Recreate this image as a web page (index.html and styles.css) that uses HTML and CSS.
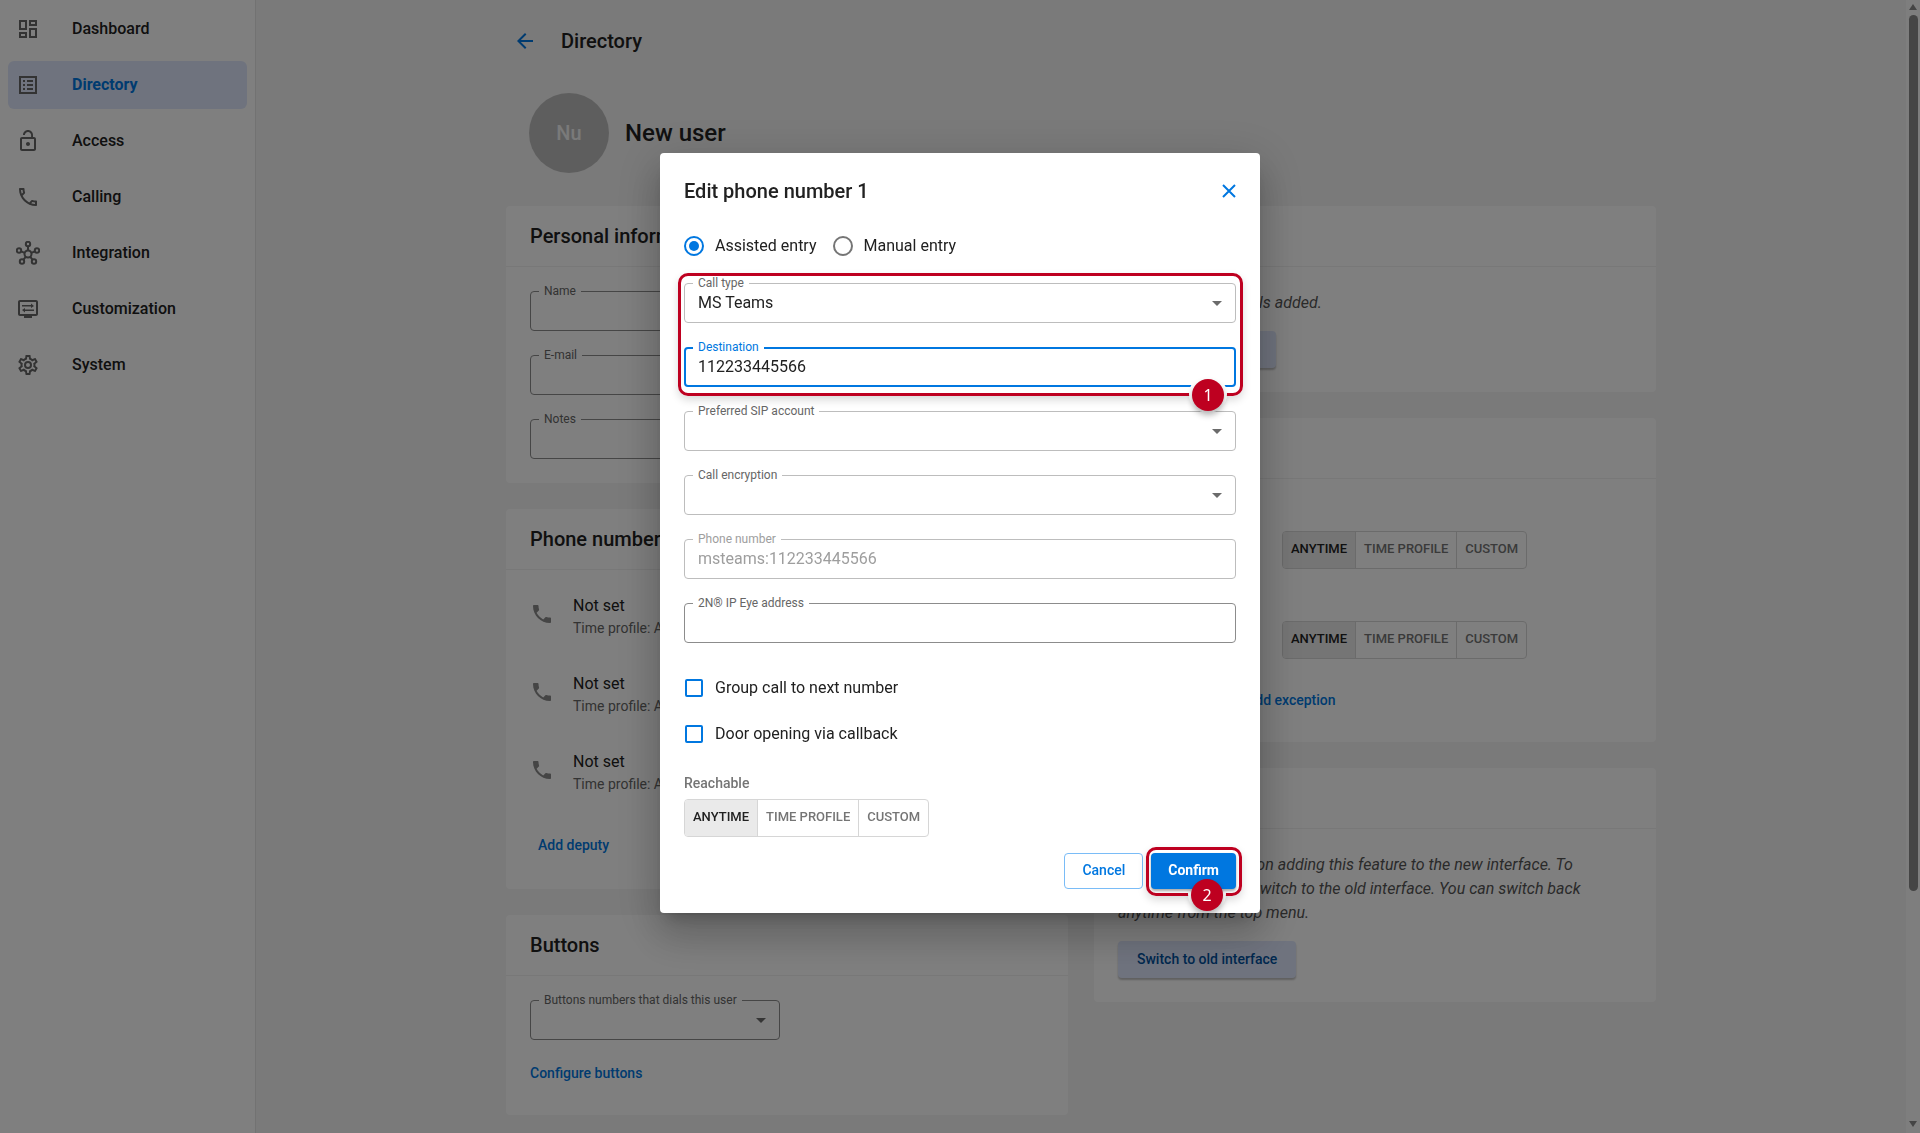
FILE: index.html
```html
<!DOCTYPE html>
<html lang="en">

<head>
    <meta charset="UTF-8">
    <meta name="viewport" content="width=device-width, initial-scale=1.0">
    <title>Directory</title>
    <link rel="stylesheet" href="styles.css">
</head>

<body>
    <div class="app">
        <nav class="sidebar">
            <a class="nav-item" href="#">
                <svg class="icon" viewBox="0 0 24 24"><path d="M19 5v2h-4V5h4M9 5v6H5V5h4m10 8v6h-4v-6h4M9 17v2H5v-2h4M21 3h-8v6h8V3zM11 3H3v10h8V3zm10 8h-8v10h8V11zm-10 4H3v6h8v-6z"/></svg>
                Dashboard
            </a>
            <a class="nav-item active" href="#">
                <svg class="icon" viewBox="0 0 24 24"><path d="M11 7h6v2h-6zm0 4h6v2h-6zm0 4h6v2h-6zM7 7h2v2H7zm0 4h2v2H7zm0 4h2v2H7zM3 3v18h18V3zM19 19H5V5h14v14z" fill-rule="evenodd"/></svg>
                Directory
            </a>
            <a class="nav-item" href="#">
                <svg class="icon" viewBox="0 0 24 24"><path d="M12 17c1.100 0 2-.9 2-2s-.9-2-2-2-2 .9-2 2 .9 2 2 2zm6-9h-1V6c0-2.760-2.240-5-5-5S7 3.240 7 6h1.900c0-1.710 1.390-3.100 3.100-3.100s3.100 1.390 3.100 3.100v2H6c-1.100 0-2 .9-2 2v10c0 1.100.9 2 2 2h12c1.100 0 2-.9 2-2V10c0-1.100-.9-2-2-2zm0 12H6V10h12v10z"/></svg>
                Access
            </a>
            <a class="nav-item" href="#">
                <svg class="icon" viewBox="0 0 24 24"><path d="M6.540 5c.06.89.21 1.760.45 2.590l-1.200 1.200c-.41-1.200-.67-2.470-.76-3.790h1.510m9.860 12.020c.85.24 1.720.39 2.600.45v1.490c-1.320-.09-2.590-.35-3.800-.75l1.200-1.190M7.500 3H4c-.55 0-1 .45-1 1 0 9.390 7.610 17 17 17 .55 0 1-.45 1-1v-3.490c0-.55-.45-1-1-1-1.240 0-2.450-.2-3.570-.57-.1-.04-.21-.05-.31-.05-.26 0-.51.1-.71.29l-2.200 2.200c-2.830-1.450-5.150-3.760-6.590-6.590l2.200-2.200c.28-.28.36-.67.25-1.020C8.700 6.450 8.500 5.250 8.500 4c0-.55-.45-1-1-1z"/></svg>
                Calling
            </a>
            <a class="nav-item" href="#">
                <svg class="icon line" viewBox="0 0 24 24">
                    <circle cx="12" cy="13" r="3.500"/><circle cx="12" cy="3" r="2.200"/><circle cx="3" cy="9.500" r="2.200"/><circle cx="21" cy="9.500" r="2.200"/><circle cx="6" cy="20.500" r="2.200"/><circle cx="18" cy="20.500" r="2.200"/>
                    <path d="M12 5.200v4.300M5.100 10.300l3.600 1.500M18.900 10.300l-3.600 1.500M7.400 18.800l2.400-3.100M16.600 18.800l-2.400-3.100"/>
                </svg>
                Integration
            </a>
            <a class="nav-item" href="#">
                <svg class="icon" viewBox="0 0 24 24"><path fill-rule="evenodd" d="M4 3h16c1.100 0 2 .9 2 2v12c0 1.100-.9 2-2 2h-4v2H8v-2H4c-1.100 0-2-.9-2-2V5c0-1.100.9-2 2-2zm0 2v12h16V5z"/><path d="M6 8h9V6.500L18 9l-3 2V9.500H6zM18 12.500v1.500H9v1.500L6 13l3-2v1.500z"/></svg>
                Customization
            </a>
            <a class="nav-item" href="#">
                <svg class="icon" viewBox="0 0 24 24"><path d="M12,8A4,4 0 0,1 16,12A4,4 0 0,1 12,16A4,4 0 0,1 8,12A4,4 0 0,1 12,8M12,10A2,2 0 0,0 10,12A2,2 0 0,0 12,14A2,2 0 0,0 14,12A2,2 0 0,0 12,10M10,22C9.75,22 9.54,21.82 9.5,21.58L9.13,18.93C8.5,18.68 7.96,18.34 7.44,17.94L4.95,18.95C4.73,19.03 4.46,18.95 4.34,18.73L2.34,15.27C2.21,15.05 2.27,14.78 2.46,14.63L4.57,12.97L4.5,12L4.57,11L2.46,9.37C2.27,9.22 2.21,8.95 2.34,8.73L4.34,5.27C4.46,5.05 4.73,4.96 4.95,5.05L7.44,6.05C7.96,5.66 8.5,5.32 9.13,5.07L9.5,2.42C9.54,2.18 9.75,2 10,2H14C14.25,2 14.46,2.18 14.5,2.42L14.87,5.07C15.5,5.32 16.04,5.66 16.56,6.05L19.05,5.05C19.27,4.96 19.54,5.05 19.66,5.27L21.66,8.73C21.79,8.95 21.73,9.22 21.54,9.37L19.43,11L19.5,12L19.43,13L21.54,14.63C21.73,14.78 21.79,15.05 21.66,15.27L19.66,18.73C19.54,18.95 19.27,19.04 19.05,18.95L16.56,17.95C16.04,18.34 15.5,18.68 14.87,18.93L14.5,21.58C14.46,21.82 14.25,22 14,22H10M11.25,4L10.88,6.61C9.68,6.86 8.62,7.5 7.85,8.39L5.44,7.35L4.69,8.65L6.8,10.2C6.4,11.37 6.4,12.64 6.8,13.8L4.68,15.36L5.43,16.66L7.86,15.62C8.63,16.5 9.68,17.14 10.87,17.38L11.24,20H12.76L13.13,17.39C14.32,17.14 15.37,16.5 16.14,15.62L18.57,16.66L19.32,15.36L17.2,13.81C17.6,12.64 17.6,11.37 17.2,10.2L19.31,8.65L18.56,7.35L16.15,8.39C15.38,7.5 14.32,6.86 13.12,6.62L12.75,4H11.25Z"/></svg>
                System
            </a>
        </nav>

        <main class="main">
            <div class="content">
                <header class="page-head">
                    <a class="back" href="#" aria-label="Back">
                        <svg class="icon" viewBox="0 0 24 24"><path d="M20 11H7.830l5.590-5.590L12 4l-8 8 8 8 1.410-1.410L7.830 13H20z"/></svg>
                    </a>
                    <h1 class="page-title">Directory</h1>
                </header>
                <div class="profile">
                    <div class="avatar">Nu</div>
                    <h2 class="profile-name">New user</h2>
                </div>

                <div class="columns">
                    <div class="column">
                        <section class="card">
                            <h3 class="card-title">Personal information</h3>
                            <div class="card-body fields">
                                <div class="field">
                                    <input type="text" id="name">
                                    <label for="name">Name</label>
                                </div>
                                <div class="field">
                                    <input type="email" id="email">
                                    <label for="email">E-mail</label>
                                </div>
                                <div class="field">
                                    <input type="text" id="notes">
                                    <label for="notes">Notes</label>
                                </div>
                            </div>
                        </section>

                        <section class="card">
                            <h3 class="card-title">Phone numbers</h3>
                            <div class="card-body phones">
                                <ul class="phone-list">
                                    <li class="phone">
                                        <svg class="icon" viewBox="0 0 24 24"><path d="M6.620 10.790c1.440 2.830 3.760 5.140 6.590 6.590l2.200-2.200c.27-.27.67-.36 1.020-.24 1.120.37 2.330.57 3.570.57.55 0 1 .45 1 1V20c0 .55-.45 1-1 1-9.390 0-17-7.610-17-17 0-.55.45-1 1-1h3.500c.55 0 1 .45 1 1 0 1.250.2 2.450.57 3.570.11.35.03.74-.25 1.020l-2.200 2.200z"/></svg>
                                        <div class="phone-text">
                                            <div>Not set</div>
                                            <div class="phone-profile">Time profile: Anytime</div>
                                        </div>
                                    </li>
                                    <li class="phone">
                                        <svg class="icon" viewBox="0 0 24 24"><path d="M6.620 10.790c1.440 2.830 3.760 5.140 6.590 6.590l2.200-2.200c.27-.27.67-.36 1.020-.24 1.120.37 2.330.57 3.570.57.55 0 1 .45 1 1V20c0 .55-.45 1-1 1-9.390 0-17-7.610-17-17 0-.55.45-1 1-1h3.500c.55 0 1 .45 1 1 0 1.250.2 2.450.57 3.570.11.35.03.74-.25 1.020l-2.200 2.200z"/></svg>
                                        <div class="phone-text">
                                            <div>Not set</div>
                                            <div class="phone-profile">Time profile: Anytime</div>
                                        </div>
                                    </li>
                                    <li class="phone">
                                        <svg class="icon" viewBox="0 0 24 24"><path d="M6.620 10.790c1.440 2.830 3.760 5.140 6.590 6.590l2.200-2.200c.27-.27.67-.36 1.020-.24 1.120.37 2.330.57 3.570.57.55 0 1 .45 1 1V20c0 .55-.45 1-1 1-9.390 0-17-7.610-17-17 0-.55.45-1 1-1h3.500c.55 0 1 .45 1 1 0 1.250.2 2.450.57 3.570.11.35.03.74-.25 1.020l-2.200 2.200z"/></svg>
                                        <div class="phone-text">
                                            <div>Not set</div>
                                            <div class="phone-profile">Time profile: Anytime</div>
                                        </div>
                                    </li>
                                </ul>
                                <button type="button" class="btn btn-text">Add deputy</button>
                            </div>
                        </section>

                        <section class="card">
                            <h3 class="card-title">Buttons</h3>
                            <div class="card-body">
                                <div class="field select narrow">
                                    <select id="dials"><option></option></select>
                                    <label for="dials">Buttons numbers that dials this user</label>
                                </div>
                                <a class="link" href="#">Configure buttons</a>
                            </div>
                        </section>
                    </div>

                    <div class="column">
                        <section class="card">
                            <h3 class="card-title">Credentials</h3>
                            <div class="card-body">
                                <p class="note">No access credentials added.</p>
                                <button type="button" class="btn btn-tonal">Add new credential</button>
                            </div>
                        </section>

                        <section class="card">
                            <h3 class="card-title">Access</h3>
                            <div class="card-body rules">
                                <div class="rule">
                                    <span>Entry</span>
                                    <div class="toggle">
                                        <button type="button" class="on">Anytime</button>
                                        <button type="button">Time profile</button>
                                        <button type="button">Custom</button>
                                    </div>
                                </div>
                                <div class="rule">
                                    <span>Exit</span>
                                    <div class="toggle">
                                        <button type="button" class="on">Anytime</button>
                                        <button type="button">Time profile</button>
                                        <button type="button">Custom</button>
                                    </div>
                                </div>
                                <button type="button" class="btn btn-text exception">Add exception</button>
                            </div>
                        </section>

                        <section class="card">
                            <h3 class="card-title">Other</h3>
                            <div class="card-body">
                                <p class="note">We are still working on adding this feature to the new interface. To configure it, please switch to the old interface. You can switch back anytime from the top menu.</p>
                                <button type="button" class="btn btn-tonal">Switch to old interface</button>
                            </div>
                        </section>
                    </div>
                </div>
            </div>
        </main>

        <div class="scrollbar">
            <span class="arrow-up"></span>
            <span class="thumb"></span>
            <span class="arrow-down"></span>
        </div>
    </div>

    <div class="backdrop">
        <form class="dialog" role="dialog" aria-labelledby="dialog-title">
            <header class="dialog-head">
                <h2 class="dialog-title" id="dialog-title">Edit phone number 1</h2>
                <button type="button" class="close" aria-label="Close">
                    <svg viewBox="0 0 14 14"><path d="M1 1l12 12M13 1L1 13"/></svg>
                </button>
            </header>

            <div class="radios">
                <label><input type="radio" name="entry" checked>Assisted entry</label>
                <label><input type="radio" name="entry">Manual entry</label>
            </div>

            <div class="fields">
                <div class="fields marked">
                    <div class="callout callout-fields"></div>
                    <div class="field select light">
                        <select id="call-type"><option>MS Teams</option></select>
                        <label for="call-type">Call type</label>
                    </div>
                    <div class="field focused">
                        <input type="text" id="destination" value="112233445566">
                        <label for="destination">Destination</label>
                    </div>
                    <span class="badge badge-fields">1</span>
                </div>
                <div class="field select light">
                    <select id="sip"><option></option></select>
                    <label for="sip">Preferred SIP account</label>
                </div>
                <div class="field select light">
                    <select id="encryption"><option></option></select>
                    <label for="encryption">Call encryption</label>
                </div>
                <div class="field light disabled">
                    <input type="text" id="phone" value="msteams:112233445566" disabled>
                    <label for="phone">Phone number</label>
                </div>
                <div class="field">
                    <input type="text" id="eye">
                    <label for="eye">2N® IP Eye address</label>
                </div>
            </div>

            <div class="checks">
                <label><input type="checkbox">Group call to next number</label>
                <label><input type="checkbox">Door opening via callback</label>
            </div>

            <div class="reach-label">Reachable</div>
            <div class="toggle">
                <button type="button" class="on">Anytime</button>
                <button type="button">Time profile</button>
                <button type="button">Custom</button>
            </div>

            <footer class="actions">
                <button type="button" class="btn btn-outline">Cancel</button>
                <div class="marked">
                    <div class="callout callout-button"></div>
                    <button type="button" class="btn btn-primary">Confirm</button>
                    <span class="badge badge-button">2</span>
                </div>
            </footer>
        </form>
    </div>
</body>

</html>
```
FILE: styles.css
```css
* {
    box-sizing: border-box;
}

body {
    margin: 0;
    font-family: Roboto, sans-serif;
    font-size: 16px;
    line-height: 24px;
    color: #212121;
    background-color: #f4f4f4;
}

h1,
h2,
h3,
p,
ul {
    margin: 0;
    padding: 0;
}

a {
    color: #0077e0;
    text-decoration: none;
}

button,
input,
select {
    font-family: inherit;
}

.app {
    display: flex;
    height: 100vh;
    overflow: hidden;
}

.icon {
    flex: none;
    display: block;
    width: 24px;
    height: 24px;
    fill: #666;
}

.icon.line {
    fill: none;
    stroke: #666;
    stroke-width: 2;
}

/* sidebar */

.sidebar {
    flex: none;
    display: flex;
    flex-direction: column;
    gap: 8px;
    width: 256px;
    padding: 5px 8px;
    background-color: #fff;
    border-right: 1px solid #e4e4e4;
}

.nav-item {
    display: flex;
    align-items: center;
    gap: 32px;
    height: 48px;
    padding: 0 8px;
    border-radius: 6px;
    font-weight: 500;
    color: #212121;
}

.nav-item.active {
    font-weight: 700;
    color: #0077e0;
    background-color: #dfe7fc;
}

/* page */

.main {
    flex: 1;
}

.content {
    max-width: 1150px;
    margin: 0 auto;
}

.page-head {
    display: flex;
    align-items: center;
    gap: 24px;
    padding: 29px 7px 0;
}

.back .icon {
    fill: #0077e0;
}

.page-title {
    font-size: 20px;
    line-height: 24px;
    font-weight: 500;
}

.profile {
    display: flex;
    align-items: center;
    gap: 16px;
    padding: 40px 23px 33px;
}

.avatar {
    width: 80px;
    height: 80px;
    border-radius: 50%;
    font-size: 20px;
    line-height: 80px;
    font-weight: 500;
    text-align: center;
    color: #f4f4f4;
    background-color: #bdbdbd;
}

.profile-name {
    font-size: 24px;
    font-weight: 500;
}

.columns {
    display: flex;
    gap: 26px;
}

.column {
    flex: 1;
    display: flex;
    flex-direction: column;
    gap: 26px;
}

.card {
    border-radius: 4px;
    background-color: #fff;
}

.card-title {
    height: 61px;
    padding: 0 24px;
    border-bottom: 1px solid #f0f0f0;
    font-size: 20px;
    line-height: 60px;
    font-weight: 500;
}

.card-body {
    padding: 24px;
}

.phones {
    padding-top: 5px;
    padding-bottom: 26px;
}

.phone-list {
    margin-bottom: 18px;
    list-style: none;
}

.phone {
    display: flex;
    align-items: center;
    gap: 19px;
    height: 78px;
}

.phone .icon {
    fill: #8a8a8a;
}

.phone-text {
    padding-top: 4px;
}

.phone-profile {
    font-size: 14px;
    line-height: 20px;
    color: #666;
}

.note {
    max-width: 500px;
    margin-bottom: 16px;
    font-style: italic;
    color: #555;
}

.link {
    display: block;
    margin-top: 15px;
    font-size: 14px;
    line-height: 36px;
    font-weight: 500;
}

.rules {
    padding-top: 23px;
}

.rule {
    display: grid;
    grid-template-columns: 164px auto;
    justify-content: start;
    align-items: center;
    height: 90px;
    padding: 29px 0 23px;
}

.exception {
    margin-left: 120px;
}

/* fields */

.fields {
    display: flex;
    flex-direction: column;
    gap: 24px;
}

.field {
    position: relative;
}

.field.narrow {
    width: 250px;
}

.field input,
.field select {
    display: block;
    width: 100%;
    height: 40px;
    padding: 0 13px 2px;
    border: 1px solid #8c8c8c;
    border-radius: 4px;
    outline: none;
    appearance: none;
    font-size: 16px;
    color: #212121;
    background: none;
    opacity: 1;
}

.field label {
    position: absolute;
    top: -7px;
    left: 9px;
    padding: 0 5px;
    font-size: 12px;
    line-height: 14px;
    color: #666;
    background-color: #fff;
}

.field.light input,
.field.light select {
    border-color: #bdbdbd;
}

.field.disabled input,
.field.disabled label {
    color: #9e9e9e;
}

.field.focused input {
    padding: 0 12px 2px;
    border: 2px solid #0077e0;
}

.field.focused label {
    color: #0077e0;
}

.field.select::after {
    content: "";
    position: absolute;
    top: 18px;
    right: 14px;
    border: 5px solid transparent;
    border-top-color: #6b6b6b;
    border-bottom: 0;
}

/* buttons */

.btn {
    height: 36px;
    padding: 0 17px 2px;
    border: 0;
    border-radius: 4px;
    font-size: 14px;
    font-weight: 500;
    color: #0077e0;
    background: none;
}

.btn-text {
    display: block;
    padding: 0 8px;
}

.btn-tonal {
    display: block;
    height: 37px;
    padding: 0 19px 2px;
    color: #00509e;
    background-color: #dfe7fc;
    box-shadow: 0 2px 2px rgba(0, 0, 0, .25);
}

.btn-outline {
    border: 1px solid #7abcf7;
}

.btn-primary {
    position: relative;
    z-index: 2;
    font-weight: 700;
    color: #fff;
    background-color: #0077e0;
    box-shadow: 0 2px 3px rgba(0, 0, 0, .35);
}

.toggle {
    display: flex;
    width: max-content;
    border: 1px solid #d6d6d6;
    border-radius: 4px;
    overflow: hidden;
}

.toggle button {
    height: 36px;
    padding: 0 8px 3px;
    border: 0;
    border-left: 1px solid #d6d6d6;
    font-size: 13px;
    font-weight: 500;
    text-transform: uppercase;
    color: #757575;
    background: none;
}

.toggle button.on {
    border-left: 0;
    color: #212121;
    background-color: #eaeaea;
}

/* scrollbar */

.scrollbar {
    flex: none;
    display: flex;
    flex-direction: column;
    align-items: center;
    width: 14px;
    padding: 4px 0 6px;
    background-color: #fcfcfc;
}

.scrollbar .thumb {
    width: 9px;
    height: 78%;
    margin: 5px 0 auto;
    border-radius: 5px;
    background-color: #8a8a8a;
}

.arrow-up,
.arrow-down {
    border: 4px solid transparent;
}

.arrow-up {
    border-top: 0;
    border-bottom: 6px solid #8a8a8a;
}

.arrow-down {
    border-top: 6px solid #8a8a8a;
    border-bottom: 0;
}

/* dialog */

.backdrop {
    position: fixed;
    inset: 0;
    display: flex;
    justify-content: center;
    align-items: flex-start;
    padding-top: 153px;
    background-color: rgba(0, 0, 0, .5);
}

.dialog {
    width: 600px;
    padding: 24px;
    border-radius: 4px;
    background-color: #fff;
    box-shadow: 0 11px 15px -7px rgba(0, 0, 0, .2), 0 24px 38px 3px rgba(0, 0, 0, .14), 0 9px 46px 8px rgba(0, 0, 0, .12);
}

.dialog-head {
    display: flex;
    justify-content: space-between;
    align-items: center;
    height: 28px;
    margin-bottom: 31px;
}

.dialog-title {
    font-size: 20px;
    font-weight: 500;
}

.close {
    width: 14px;
    height: 14px;
    padding: 0;
    border: 0;
    background: none;
}

.close svg {
    display: block;
    fill: none;
    stroke: #0077e0;
    stroke-width: 2;
}

.radios {
    display: flex;
    gap: 16px;
    margin-bottom: 27px;
}

.radios label,
.checks label {
    display: flex;
    align-items: center;
    gap: 11px;
}

.radios label {
    line-height: 20px;
}

.radios input {
    appearance: none;
    width: 20px;
    height: 20px;
    margin: 0;
    border: 2px solid #757575;
    border-radius: 50%;
}

.radios input:checked {
    border-color: #0077e0;
    background: #0077e0 content-box;
    padding: 3px;
}

.checks {
    display: flex;
    flex-direction: column;
    gap: 22px;
    margin: 33px 0 27px;
}

.checks input {
    appearance: none;
    width: 18px;
    height: 18px;
    margin: 0 1px;
    border: 2px solid #0077e0;
    border-radius: 2px;
}

.reach-label {
    margin-bottom: 6px;
    font-size: 14px;
    line-height: 20px;
    font-weight: 500;
    color: #757575;
}

.actions {
    display: flex;
    justify-content: flex-end;
    gap: 8px;
    margin-top: 16px;
}

/* numbered callouts */

.marked {
    position: relative;
}

.callout {
    position: absolute;
    z-index: 1;
    border: 3px solid #be0020;
    border-radius: 10px;
    box-shadow: 0 4px 8px rgba(0, 0, 0, .15);
    pointer-events: none;
}

.callout-fields {
    inset: -10px -7px -9px -6px;
}

.callout-button {
    inset: -6px -6px -7px -5px;
}

/* gap in the outline around the badge */
.callout::after {
    content: "";
    position: absolute;
    right: 13px;
    bottom: -20px;
    width: 38px;
    height: 38px;
    border-radius: 50%;
    background-color: #fff;
}

.badge {
    position: absolute;
    z-index: 3;
    width: 32px;
    height: 32px;
    border-radius: 50%;
    font: 16px/32px "Noto Sans", sans-serif;
    text-align: center;
    color: #fff;
    background-color: #be0020;
    box-shadow: 0 4px 6px rgba(0, 0, 0, .3);
}

.badge-fields {
    right: 12px;
    bottom: -24px;
}

.badge-button {
    right: 13px;
    bottom: -22px;
}
```
